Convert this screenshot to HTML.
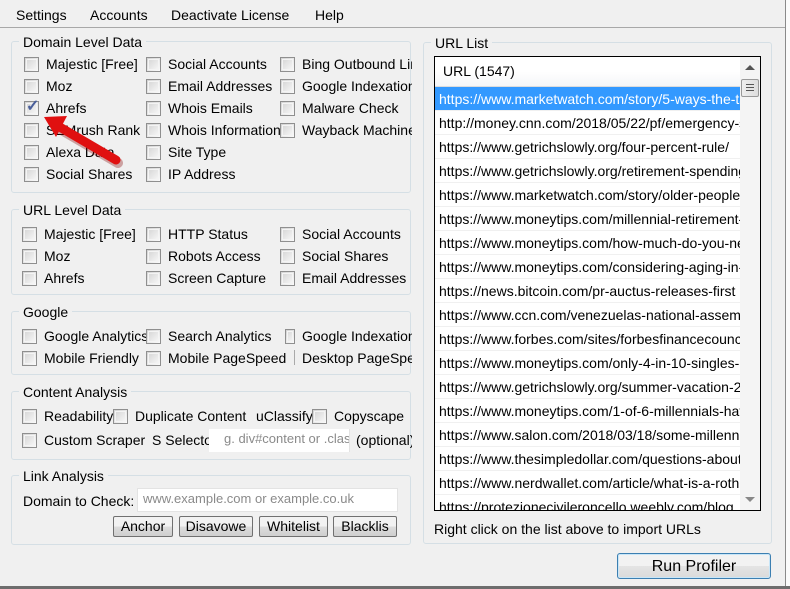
<!DOCTYPE html>
<html><head><style>
*{margin:0;padding:0;box-sizing:border-box}
body{width:790px;height:589px;background:#f0f0f0;font-family:"Liberation Sans",sans-serif;font-size:14px;color:#000;position:relative;overflow:hidden}
.a{position:absolute;white-space:nowrap;line-height:16px}
.cb{position:absolute;width:15px;height:15px;border:1px solid #8f8f8f;background:linear-gradient(135deg,#d2d2d2,#fbfbfb)}
.cb:after{content:"";position:absolute;inset:1px;border:1px solid #f4f4f4}
.g{position:absolute;border:1px solid #d5dfe5;border-radius:3px}
.gt{position:absolute;background:#f0f0f0;padding:0 4px;line-height:16px;white-space:nowrap}
.clip{position:absolute;left:0;top:0;width:412px;height:589px;overflow:hidden}
.btn{position:absolute;height:21px;border:1px solid #707070;border-radius:2px;background:linear-gradient(#f2f2f2 50%,#dddddd 50%,#cfcfcf);text-align:center;line-height:19px}
.inp{position:absolute;background:#fff;border:1px solid #e3e3e3;color:#8a8a8a;line-height:20px;overflow:hidden;white-space:nowrap}
.row{height:24px;line-height:24px;padding-left:4px;border-bottom:1px solid #f0f0f0;white-space:nowrap;overflow:hidden}
</style></head><body>
<div class="a" style="left:16px;top:7px">Settings</div>
<div class="a" style="left:90px;top:7px">Accounts</div>
<div class="a" style="left:171px;top:7px">Deactivate License</div>
<div class="a" style="left:315px;top:7px">Help</div>
<div style="position:absolute;left:0;top:27px;width:785px;height:1px;background:#a8a8a8"></div>
<div style="position:absolute;left:785px;top:0;width:1px;height:589px;background:#8a8a8a"></div>
<div style="position:absolute;left:786px;top:0;width:4px;height:589px;background:#fbfbfb"></div>
<div style="position:absolute;left:0;top:586px;width:790px;height:3px;background:#6d6d6d"></div>

<div class="clip">
<div class="g" style="left:11px;top:41px;width:400px;height:152px"></div>
<div class="gt" style="left:19px;top:34px">Domain Level Data</div>
<div class="cb" style="left:24px;top:57px"></div><div class="a" style="left:46px;top:56px">Majestic [Free]</div>
<div class="cb" style="left:24px;top:79px"></div><div class="a" style="left:46px;top:78px">Moz</div>
<div class="cb" style="left:24px;top:101px"></div><div class="a" style="left:46px;top:100px">Ahrefs</div>
<div class="a" style="left:26px;top:99px;color:#4a5f9a;font-size:16px;font-weight:bold">✓</div>
<div class="cb" style="left:24px;top:123px"></div><div class="a" style="left:46px;top:122px">SEMrush Rank</div>
<div class="cb" style="left:24px;top:145px"></div><div class="a" style="left:46px;top:144px">Alexa Data</div>
<div class="cb" style="left:24px;top:167px"></div><div class="a" style="left:46px;top:166px">Social Shares</div>
<div class="cb" style="left:146px;top:57px"></div><div class="a" style="left:168px;top:56px">Social Accounts</div>
<div class="cb" style="left:146px;top:79px"></div><div class="a" style="left:168px;top:78px">Email Addresses</div>
<div class="cb" style="left:146px;top:101px"></div><div class="a" style="left:168px;top:100px">Whois Emails</div>
<div class="cb" style="left:146px;top:123px"></div><div class="a" style="left:168px;top:122px">Whois Information</div>
<div class="cb" style="left:146px;top:145px"></div><div class="a" style="left:168px;top:144px">Site Type</div>
<div class="cb" style="left:146px;top:167px"></div><div class="a" style="left:168px;top:166px">IP Address</div>
<div class="cb" style="left:280px;top:57px"></div><div class="a" style="left:302px;top:56px">Bing Outbound Links</div>
<div class="cb" style="left:280px;top:79px"></div><div class="a" style="left:302px;top:78px">Google Indexation</div>
<div class="cb" style="left:280px;top:101px"></div><div class="a" style="left:302px;top:100px">Malware Check</div>
<div class="cb" style="left:280px;top:123px"></div><div class="a" style="left:302px;top:122px">Wayback Machine</div>

<div class="g" style="left:11px;top:209px;width:400px;height:86px"></div>
<div class="gt" style="left:19px;top:202px">URL Level Data</div>
<div class="cb" style="left:22px;top:227px"></div><div class="a" style="left:44px;top:226px">Majestic [Free]</div>
<div class="cb" style="left:22px;top:249px"></div><div class="a" style="left:44px;top:248px">Moz</div>
<div class="cb" style="left:22px;top:271px"></div><div class="a" style="left:44px;top:270px">Ahrefs</div>
<div class="cb" style="left:146px;top:227px"></div><div class="a" style="left:168px;top:226px">HTTP Status</div>
<div class="cb" style="left:146px;top:249px"></div><div class="a" style="left:168px;top:248px">Robots Access</div>
<div class="cb" style="left:146px;top:271px"></div><div class="a" style="left:168px;top:270px">Screen Capture</div>
<div class="cb" style="left:280px;top:227px"></div><div class="a" style="left:302px;top:226px">Social Accounts</div>
<div class="cb" style="left:280px;top:249px"></div><div class="a" style="left:302px;top:248px">Social Shares</div>
<div class="cb" style="left:280px;top:271px"></div><div class="a" style="left:302px;top:270px">Email Addresses</div>

<div class="g" style="left:11px;top:311px;width:400px;height:64px"></div>
<div class="gt" style="left:19px;top:304px">Google</div>
<div class="cb" style="left:22px;top:329px"></div><div class="a" style="left:44px;top:328px">Google Analytics</div>
<div class="cb" style="left:22px;top:351px"></div><div class="a" style="left:44px;top:350px">Mobile Friendly</div>
<div class="cb" style="left:146px;top:329px"></div><div class="a" style="left:168px;top:328px">Search Analytics</div>
<div class="cb" style="left:146px;top:351px"></div><div class="a" style="left:168px;top:350px">Mobile PageSpeed</div>
<div class="cb" style="left:285px;top:329px;width:10px"></div><div class="a" style="left:302px;top:328px">Google Indexation</div>
<div style="position:absolute;left:294px;top:350px;width:1px;height:15px;background:#aaa"></div><div class="a" style="left:302px;top:350px">Desktop PageSpeed</div>

<div class="g" style="left:11px;top:391px;width:400px;height:69px"></div>
<div class="gt" style="left:19px;top:384px">Content Analysis</div>
<div class="cb" style="left:22px;top:409px"></div><div class="a" style="left:44px;top:408px">Readability</div>
<div class="cb" style="left:113px;top:409px"></div><div class="a" style="left:135px;top:408px">Duplicate Content</div>
<div class="a" style="left:256px;top:408px">uClassify</div>
<div class="cb" style="left:312px;top:409px"></div><div class="a" style="left:334px;top:408px">Copyscape</div>
<div class="cb" style="left:22px;top:433px"></div><div class="a" style="left:44px;top:432px">Custom Scraper</div>
<div class="a" style="left:152px;top:432px">S Selector:</div>
<div class="inp" style="left:209px;top:429px;width:141px;height:23px;font-size:13px;padding-left:15px;border:none;border-right:1px solid #e3e3e3">g. div#content or .class</div>
<div class="a" style="left:356px;top:432px">(optional)</div>

<div class="g" style="left:11px;top:475px;width:400px;height:70px"></div>
<div class="gt" style="left:19px;top:468px">Link Analysis</div>
<div class="a" style="left:23px;top:493px">Domain to Check:</div>
<div class="inp" style="left:137px;top:488px;width:261px;height:24px;font-size:13px;padding-left:5px">www.example.com or example.co.uk</div>
<div class="btn" style="left:113px;top:516px;width:60px">Anchor</div>
<div class="btn" style="left:179px;top:516px;width:74px">Disavowe</div>
<div class="btn" style="left:259px;top:516px;width:69px">Whitelist</div>
<div class="btn" style="left:333px;top:516px;width:64px">Blacklis</div>
</div>

<svg style="position:absolute;left:0;top:0" width="200" height="200">
<line x1="116" y1="160" x2="58" y2="126" stroke="#8a1010" stroke-width="10" stroke-linecap="round" opacity=".35" transform="translate(2,3)"/>
<line x1="116" y1="160" x2="58" y2="126" stroke="#e01010" stroke-width="9" stroke-linecap="round"/>
<polygon points="44,117 67,116 56,137" fill="#e01010"/>
</svg>

<div class="g" style="left:423px;top:42px;width:349px;height:502px"></div>
<div class="gt" style="left:431px;top:35px">URL List</div>
<div style="position:absolute;left:434px;top:56px;width:327px;height:455px;border:1px solid #000;background:#fff;overflow:hidden">
 <div style="position:absolute;left:0;top:0;width:305px;height:30px;background:linear-gradient(#fff 0,#fff 50%,#f5f6f8);border-bottom:1px solid #dcdcdc;line-height:28px;padding-left:8px">URL (1547)</div>
 <div style="position:absolute;left:0;top:30px;width:305px">
  <div class="row" style="background:#3399ff;color:#fff">https://www.marketwatch.com/story/5-ways-the-tax-law</div>
  <div class="row">http://money.cnn.com/2018/05/22/pf/emergency-savings</div>
  <div class="row">https://www.getrichslowly.org/four-percent-rule/</div>
  <div class="row">https://www.getrichslowly.org/retirement-spending</div>
  <div class="row">https://www.marketwatch.com/story/older-people-are</div>
  <div class="row">https://www.moneytips.com/millennial-retirement-savings</div>
  <div class="row">https://www.moneytips.com/how-much-do-you-need</div>
  <div class="row">https://www.moneytips.com/considering-aging-in-place</div>
  <div class="row">https://news.bitcoin.com/pr-auctus-releases-first</div>
  <div class="row">https://www.ccn.com/venezuelas-national-assembly</div>
  <div class="row">https://www.forbes.com/sites/forbesfinancecouncil</div>
  <div class="row">https://www.moneytips.com/only-4-in-10-singles-have</div>
  <div class="row">https://www.getrichslowly.org/summer-vacation-2018</div>
  <div class="row">https://www.moneytips.com/1-of-6-millennials-have</div>
  <div class="row">https://www.salon.com/2018/03/18/some-millennials</div>
  <div class="row">https://www.thesimpledollar.com/questions-about</div>
  <div class="row">https://www.nerdwallet.com/article/what-is-a-roth-ira</div>
  <div class="row">https://protezionecivileroncello.weebly.com/blog</div>
 </div>
 <div style="position:absolute;left:305px;top:0;width:20px;height:453px;background:#f4f4f4"></div>
 <div style="position:absolute;left:310px;top:8px;width:0;height:0;border-left:5px solid transparent;border-right:5px solid transparent;border-bottom:5px solid #555"></div>
 <div style="position:absolute;left:306px;top:22px;width:18px;height:18px;border:1px solid #999;border-radius:2px;background:linear-gradient(90deg,#eee,#ddd)"></div>
 <div style="position:absolute;left:311px;top:27px;width:8px;height:1px;background:#555;box-shadow:0 3px 0 #555,0 6px 0 #555"></div>
 <div style="position:absolute;left:310px;top:440px;width:0;height:0;border-left:5px solid transparent;border-right:5px solid transparent;border-top:5px solid #888"></div>
</div>
<div class="a" style="left:434px;top:521px">Right click on the list above to import URLs</div>

<div style="position:absolute;left:617px;top:553px;width:154px;height:26px;border:1px solid #3c7fb1;border-radius:3px;background:linear-gradient(#f2f2f2 50%,#e4e4e4 50%,#dadada);box-shadow:inset 0 0 0 1px #c8e6f8;text-align:center;line-height:26px;font-size:16px">Run Profiler</div>
</body></html>
